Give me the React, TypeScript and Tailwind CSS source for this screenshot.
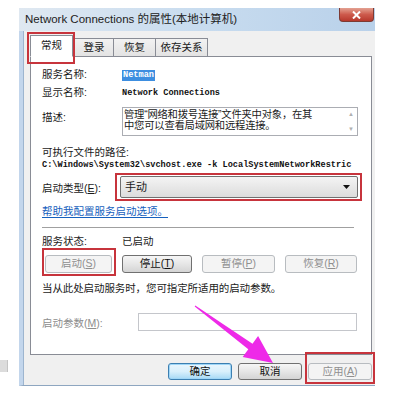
import React from 'react';

const mono = "font-['Liberation_Mono',monospace] font-bold text-[8.6px] text-[#111]";

function Btn({
    label,
    w,
    disabled,
    focus,
}: {
    label: React.ReactNode;
    w: string;
    disabled?: boolean;
    focus?: boolean;
}) {
    let cls =
        'border-[#707070] bg-gradient-to-b from-[#f6f6f6] via-[#e6e6e6] to-[#d4d4d4] text-[#111]';
    if (disabled) cls = 'border-[#b8bcc0] bg-[#f4f4f4] text-[#8f8f8f]';
    if (focus)
        cls =
            'border-[#3c7fb1] bg-gradient-to-b from-[#eaf6fd] via-[#d9f0fc] to-[#a7d9f5] text-[#111] shadow-[inset_0_0_0_1px_#9fd6f7]';
    return (
        <div className={`${w} h-full rounded-[3px] border flex items-center justify-center text-[10.5px] ${cls}`}>
            {label}
        </div>
    );
}

export default function App() {
    return (
        <div className="w-[395px] h-[394px] bg-white relative overflow-hidden font-['Liberation_Sans','Noto_Sans_CJK_SC',sans-serif] text-[#1a1a1a]">
            {/* stray fragment at left edge */}
            <div className="absolute left-0 top-[360px] w-[8px] h-[12px] bg-[#dcdcdc] border-r border-[#c4c4c4]" />

            <div className="pt-[8px] pl-[19px]">
                <div className="w-[356px] h-[378px] flex flex-col">
                    {/* title bar */}
                    <div className="h-[23px] flex items-start bg-gradient-to-r from-[#dfe8f1] via-[#c8dcef] to-[#b9d1ea]">
                        <div className="flex-1 pl-[6px] pt-[4px] text-[11.5px] leading-[14px] text-[#222] whitespace-nowrap">
                            Network Connections 的属性(本地计算机)
                        </div>
                        <div className="w-[35px] h-[14px] mr-[1px] rounded-b-[4px] border border-t-0 border-[#7d3a33] bg-gradient-to-b from-[#e3a192] via-[#cd5a4c] to-[#b7382c] flex items-center justify-center">
                            <svg width="9" height="8" viewBox="0 0 9 8">
                                <path d="M1 0.5l7 7M8 0.5l-7 7" stroke="#fff" strokeWidth="2" />
                            </svg>
                        </div>
                    </div>

                    {/* body */}
                    <div className="flex-1 flex border-l-[4px] border-l-[#c3d6ec] border-b border-b-[#8ea6c0] bg-[#f0f0f0]">
                        <div className="w-[1px] bg-[#9db5cf]" />
                        <div className="flex-1 flex flex-col pl-[6px] pr-[2px] relative">
                            {/* tabs */}
                            <div className="h-[25px] flex items-end text-[10.5px]">
                                <div className="w-[43px] h-[22px] bg-white border border-[#898c95] border-b-white -mb-px z-10 flex items-center justify-center">
                                    常规
                                </div>
                                <div className="w-[40px] h-[18px] ml-[1px] bg-gradient-to-b from-[#f2f2f2] to-[#e3e3e3] border border-[#898c95] border-b-0 flex items-center justify-center">
                                    登录
                                </div>
                                <div className="w-[42px] h-[18px] bg-gradient-to-b from-[#f2f2f2] to-[#e3e3e3] border border-l-0 border-[#898c95] border-b-0 flex items-center justify-center">
                                    恢复
                                </div>
                                <div className="w-[52px] h-[18px] bg-gradient-to-b from-[#f2f2f2] to-[#e3e3e3] border border-l-0 border-[#898c95] border-b-0 flex items-center justify-center">
                                    依存关系
                                </div>
                            </div>

                            {/* panel */}
                            <div className="w-[342px] h-[299px] bg-white border border-[#898c95] pl-[11px] flex flex-col text-[10.5px]">
                                <div className="mt-[9px] h-[18px] flex items-center">
                                    <div className="w-[80px]">服务名称:</div>
                                    <div className={`${mono} bg-[#3d8ee0] text-white px-[1px] leading-[11px]`}>Netman</div>
                                </div>
                                <div className="h-[18px] flex items-center">
                                    <div className="w-[80px]">显示名称:</div>
                                    <div className={mono}>Network Connections</div>
                                </div>
                                <div className="mt-[5px] h-[29px] flex items-start">
                                    <div className="w-[80px] pt-[3px]">描述:</div>
                                    <div className="w-[236px] h-full border border-[#abadb3] flex">
                                        <div className="flex-1 pl-[1px] text-[10.3px] leading-[11px] pt-px tracking-[-0.2px]">
                                            <div className="whitespace-nowrap">管理“网络和拨号连接”文件夹中对象，在其</div>
                                            <div className="whitespace-nowrap">中您可以查看局域网和远程连接。</div>
                                        </div>
                                        <div className="w-[12px] flex flex-col items-center justify-between py-[3px] text-[6px] text-[#b0b0b0] leading-none">
                                            <span>▲</span>
                                            <span>▼</span>
                                        </div>
                                    </div>
                                </div>
                                <div className="mt-[10px] h-[14px] flex items-center">可执行文件的路径:</div>
                                <div className={`h-[11px] flex items-center whitespace-nowrap ${mono}`}>
                                    C:\Windows\System32\svchost.exe -k LocalSystemNetworkRestric
                                </div>
                                <div className="mt-[5px] h-[22px] flex items-center">
                                    <div className="w-[78px] pt-[3px]">启动类型(<span className="underline">E</span>):</div>
                                    <div className="w-[238px] h-full border border-[#707070] rounded-[2px] bg-gradient-to-b from-[#f4f4f4] to-[#dcdcdc] flex items-center pl-[4px] pr-[7px]">
                                        <span className="flex-1 text-[11px]">手动</span>
                                        <svg width="7" height="4" viewBox="0 0 7 4">
                                            <path d="M0 0h7L3.5 4z" fill="#111" />
                                        </svg>
                                    </div>
                                </div>
                                <div className="mt-[7px] h-[14px] flex items-center">
                                    <span className="text-[#1560bd] underline underline-offset-2">帮助我配置服务启动选项。</span>
                                </div>
                                <div className="mt-[8px] w-[312px] h-px bg-[#a0a0a0]" />
                                <div className="mt-[7px] h-[14px] flex items-center">
                                    <div className="w-[80px]">服务状态:</div>
                                    <div>已启动</div>
                                </div>
                                <div className="mt-[6px] h-[18px] flex items-center gap-[10px] pl-[3px]">
                                    <Btn w="w-[67px]" disabled label={<>启动(<span className="underline">S</span>)</>} />
                                    <Btn w="w-[70px]" label={<>停止(<span className="underline">T</span>)</>} />
                                    <Btn w="w-[73px]" disabled label={<>暂停(<span className="underline">P</span>)</>} />
                                    <Btn w="w-[72px]" disabled label={<>恢复(<span className="underline">R</span>)</>} />
                                </div>
                                <div className="mt-[9px] h-[14px] flex items-center whitespace-nowrap tracking-[-0.1px]">
                                    当从此处启动服务时，您可指定所适用的启动参数。
                                </div>
                                <div className="mt-[17px] h-[18px] flex items-center">
                                    <div className="w-[96px] text-[#8d8d8d] pt-[3px]">启动参数(<span className="underline">M</span>):</div>
                                    <div className="w-[219px] h-full border border-[#c4c6cb] bg-white" />
                                </div>
                            </div>

                            {/* dialog buttons */}
                            <div className="mt-[8px] h-[17px] flex gap-[6px] pl-[138px]">
                                <Btn w="w-[64px]" focus label="确定" />
                                <Btn w="w-[64px]" label="取消" />
                                <Btn w="w-[64px]" disabled label={<>应用(<span className="underline">A</span>)</>} />
                            </div>
                        </div>
                    </div>
                </div>
            </div>

            {/* red annotation boxes */}
            <div className="absolute left-[27px] top-[32px] w-[48px] h-[32px] border-2 border-[#c7343c]" />
            <div className="absolute left-[115px] top-[173px] w-[247px] h-[28px] border-2 border-[#c7343c]" />
            <div className="absolute left-[42px] top-[248px] w-[74px] h-[28px] border-2 border-[#c7343c]" />
            <div className="absolute left-[305px] top-[352px] w-[70px] h-[32px] border-2 border-[#c7343c]" />

            {/* magenta arrow */}
            <svg className="absolute left-0 top-0 pointer-events-none" width="395" height="394" viewBox="0 0 395 394">
                <polygon
                    points="195.3,305.6 252.5,343.7 258.1,336 273,363 242.7,357 248.3,349.3 194.7,306.4"
                    fill="#ee2ae8"
                />
            </svg>
        </div>
    );
}
